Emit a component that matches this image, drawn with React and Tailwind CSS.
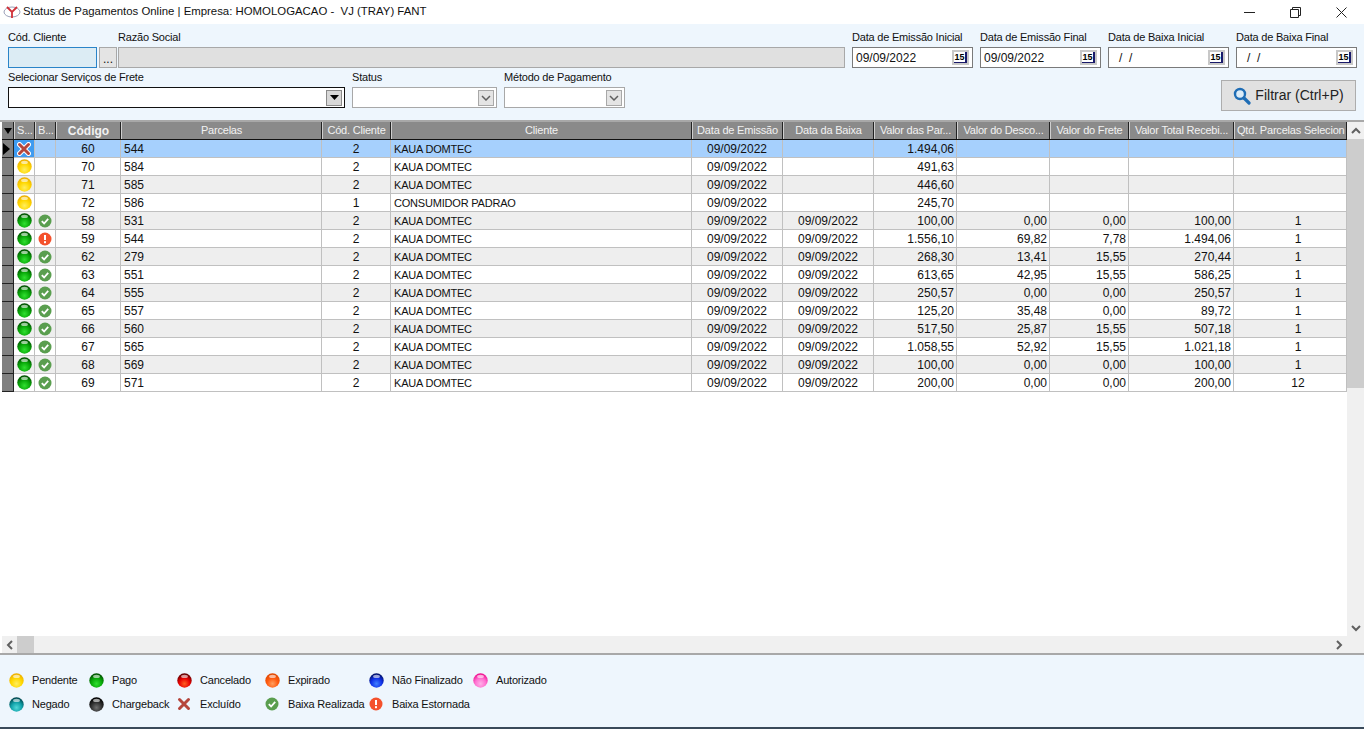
import { useId } from "react";

const FONT = "font-['Liberation_Sans',sans-serif]";
const LABEL = "text-[11px] tracking-[-0.2px]";

const columns = [
  { key: "codigo", label: "Código", w: "w-[65px]", align: "text-center", bold: true },
  { key: "parcelas", label: "Parcelas", w: "w-[201px]", align: "text-left pl-[3px]" },
  { key: "codCliente", label: "Cód. Cliente", w: "w-[69px]", align: "text-center" },
  { key: "cliente", label: "Cliente", w: "w-[301px]", align: `text-left pl-[3px] ${LABEL}` },
  { key: "emissao", label: "Data de Emissão", w: "w-[91px]", align: "text-center" },
  { key: "baixa", label: "Data da Baixa", w: "w-[91px]", align: "text-center" },
  { key: "valor", label: "Valor das Par...", w: "w-[83px]", align: "text-right" },
  { key: "desconto", label: "Valor do Desco...", w: "w-[93px]", align: "text-right" },
  { key: "frete", label: "Valor do Frete", w: "w-[79px]", align: "text-right" },
  { key: "total", label: "Valor Total Recebi...", w: "w-[105px]", align: "text-right" },
  { key: "qtd", label: "Qtd. Parcelas Selecion", w: "w-[113px]", align: "text-center pl-[18px]" },
];

const d = "09/09/2022";
const rows = [
  ["x", "", 60, 544, 2, "KAUA DOMTEC", d, "", "1.494,06", "", "", "", ""],
  ["yellow", "", 70, 584, 2, "KAUA DOMTEC", d, "", "491,63", "", "", "", ""],
  ["yellow", "", 71, 585, 2, "KAUA DOMTEC", d, "", "446,60", "", "", "", ""],
  ["yellow", "", 72, 586, 1, "CONSUMIDOR PADRAO", d, "", "245,70", "", "", "", ""],
  ["green", "ok", 58, 531, 2, "KAUA DOMTEC", d, d, "100,00", "0,00", "0,00", "100,00", 1],
  ["green", "err", 59, 544, 2, "KAUA DOMTEC", d, d, "1.556,10", "69,82", "7,78", "1.494,06", 1],
  ["green", "ok", 62, 279, 2, "KAUA DOMTEC", d, d, "268,30", "13,41", "15,55", "270,44", 1],
  ["green", "ok", 63, 551, 2, "KAUA DOMTEC", d, d, "613,65", "42,95", "15,55", "586,25", 1],
  ["green", "ok", 64, 555, 2, "KAUA DOMTEC", d, d, "250,57", "0,00", "0,00", "250,57", 1],
  ["green", "ok", 65, 557, 2, "KAUA DOMTEC", d, d, "125,20", "35,48", "0,00", "89,72", 1],
  ["green", "ok", 66, 560, 2, "KAUA DOMTEC", d, d, "517,50", "25,87", "15,55", "507,18", 1],
  ["green", "ok", 67, 565, 2, "KAUA DOMTEC", d, d, "1.058,55", "52,92", "15,55", "1.021,18", 1],
  ["green", "ok", 68, 569, 2, "KAUA DOMTEC", d, d, "100,00", "0,00", "0,00", "100,00", 1],
  ["green", "ok", 69, 571, 2, "KAUA DOMTEC", d, d, "200,00", "0,00", "0,00", "200,00", 12],
];

const ballColors = {
  yellow: ["#ffee60", "#ffd800", "#eeb000"],
  green: ["#30e030", "#08a808", "#005000"],
  red: ["#ff6020", "#e80000", "#600000"],
  orange: ["#ffa060", "#ff5a10", "#e04800"],
  blue: ["#4080ff", "#1030e8", "#001068"],
  pink: ["#ffb0e8", "#ff70d0", "#f01090"],
  teal: ["#50d8d8", "#10a0a8", "#004850"],
  black: ["#707070", "#303030", "#000000"],
};

function Ball({ color }) {
  const id = useId();
  const c = ballColors[color];
  return (
    <svg width="15" height="15" viewBox="0 0 15 15" className="shrink-0">
      <defs>
        <radialGradient id={id} cx="50%" cy="72%" r="68%">
          <stop offset="0%" stopColor={c[0]} />
          <stop offset="55%" stopColor={c[1]} />
          <stop offset="100%" stopColor={c[2]} />
        </radialGradient>
      </defs>
      <circle cx="7.5" cy="7.5" r="7.2" fill={`url(#${id})`} />
      <ellipse cx="7.5" cy="3.4" rx="3.4" ry="1.6" fill="#fff" opacity="0.6" />
    </svg>
  );
}

function XIcon({ outlined }) {
  return (
    <svg width="14" height="14" viewBox="0 0 14 14" className="shrink-0">
      {outlined && <path d="M2.5 2.5 11.5 11.5M11.5 2.5 2.5 11.5" stroke="#fff" strokeWidth="5" strokeLinecap="round" />}
      <path d="M2.5 2.5 11.5 11.5M11.5 2.5 2.5 11.5" stroke="#b5463c" strokeWidth="3" strokeLinecap="round" />
    </svg>
  );
}

function OkIcon() {
  return (
    <svg width="14" height="14" viewBox="0 0 14 14" className="shrink-0">
      <circle cx="7" cy="7" r="6.5" fill="#5a9e4f" />
      <path d="M3.8 7.2 6.1 9.5 10.2 4.9" fill="none" stroke="#fff" strokeWidth="1.8" />
    </svg>
  );
}

function ErrIcon() {
  return (
    <svg width="14" height="14" viewBox="0 0 14 14" className="shrink-0">
      <circle cx="7" cy="7" r="6.5" fill="#f4512c" />
      <rect x="6" y="3" width="2" height="5" fill="#fff" />
      <rect x="6" y="9.2" width="2" height="2" fill="#fff" />
    </svg>
  );
}

function StatusIcon({ kind, outlined }) {
  if (kind === "x") return <XIcon outlined={outlined} />;
  if (kind === "ok") return <OkIcon />;
  if (kind === "err") return <ErrIcon />;
  if (kind) return <Ball color={kind} />;
  return null;
}

function HeaderCell({ w, bold, left, children }) {
  return (
    <div className={`${w} shrink-0 h-full bg-[#8a8a8a] border-l border-l-[#cfcfcf] border-r border-r-[#222] flex items-center ${left ? "justify-start pl-[2px]" : "justify-center"} overflow-hidden whitespace-nowrap text-[#f2f2f2] ${bold ? "font-bold text-[12px]" : LABEL}`}>
      {children}
    </div>
  );
}

function CalendarButton() {
  return (
    <div className="w-[17px] h-[15px] bg-[#c8c8c8] flex items-center justify-center">
      <div className="w-[13px] h-[11px] bg-white border-r-2 border-b border-r-[#1a1a6a] border-b-[#1a1a6a] flex items-center justify-center">
        <span className="text-[9px] leading-none font-bold text-black">15</span>
      </div>
    </div>
  );
}

function DateField({ label, value }) {
  return (
    <div className="w-[121px] flex flex-col">
      <span className={`h-[23px] pt-[3px] flex items-center whitespace-nowrap ${LABEL}`}>{label}</span>
      <div className="h-[21px] bg-white border border-[#7a7a7a] flex items-center justify-between pl-[3px] pr-[3px]">
        <span className={value ? "" : "pl-[7px] whitespace-pre"}>{value || "/  /"}</span>
        <CalendarButton />
      </div>
    </div>
  );
}

function ComboButton({ disabled }) {
  return (
    <div className={`w-[16px] h-[16px] border flex items-center justify-center ${disabled ? "bg-[#e4e4e4] border-[#a8a8a8]" : "bg-[#d8d8d8] border-[#8a8a8a]"}`}>
      {disabled ? (
        <svg width="10" height="6" viewBox="0 0 10 6">
          <path d="M1 1 5 5 9 1" fill="none" stroke="#606060" strokeWidth="1.5" />
        </svg>
      ) : (
        <svg width="9" height="5" viewBox="0 0 9 5">
          <path d="M0 0H9L4.5 5Z" fill="#000" />
        </svg>
      )}
    </div>
  );
}

function ComboField({ label, w, active }) {
  return (
    <div className={`${w} flex flex-col`}>
      <span className={`h-[19px] flex items-center whitespace-nowrap ${LABEL}`}>{label}</span>
      <div className={`h-[21px] bg-white border flex items-center justify-end pr-[2px] ${active ? "border-[#111]" : "border-[#a8a8a8]"}`}>
        <ComboButton disabled={!active} />
      </div>
    </div>
  );
}

function Chevron({ dir }) {
  const paths = {
    up: "M1 6 5 2 9 6",
    down: "M1 2 5 6 9 2",
    left: "M6 1 2 5 6 9",
    right: "M2 1 6 5 2 9",
  };
  const box = dir === "up" || dir === "down" ? "0 0 10 8" : "0 0 8 10";
  const size = dir === "up" || dir === "down" ? [10, 8] : [8, 10];
  return (
    <svg width={size[0]} height={size[1]} viewBox={box}>
      <path d={paths[dir]} fill="none" stroke="#606060" strokeWidth="2" />
    </svg>
  );
}

const legend = [
  ["yellow", "Pendente"],
  ["green", "Pago"],
  ["red", "Cancelado"],
  ["orange", "Expirado"],
  ["blue", "Não Finalizado"],
  ["pink", "Autorizado"],
  ["teal", "Negado"],
  ["black", "Chargeback"],
  ["x", "Excluído"],
  ["ok", "Baixa Realizada"],
  ["err", "Baixa Estornada"],
];

export default function App() {
  return (
    <div className={`${FONT} w-[1364px] h-[729px] overflow-hidden flex flex-col bg-white text-[12px] text-[#111]`}>
      {/* TITLE BAR */}
      <div className="h-[24px] shrink-0 flex items-center bg-white">
        <svg width="18" height="14" viewBox="0 0 18 14" className="ml-[3px] mr-[2px]">
          <ellipse cx="9" cy="7" rx="8" ry="5" fill="none" stroke="#9aa0b8" strokeWidth="1" />
          <path d="M4 2 9 7 14 2M9 7V13" fill="none" stroke="#d03038" strokeWidth="1.8" />
        </svg>
        <span className="whitespace-pre text-[11.4px]">Status de Pagamentos Online | Empresa: HOMOLOGACAO -  VJ (TRAY) FANT</span>
        <div className="ml-auto flex items-center h-full">
          <div className="w-[46px] flex justify-center">
            <svg width="11" height="11" viewBox="0 0 11 11"><path d="M0 5.5H11" stroke="#222" /></svg>
          </div>
          <div className="w-[46px] flex justify-center">
            <svg width="11" height="11" viewBox="0 0 11 11" fill="none" stroke="#222"><path d="M.5 2.5H8.5V10.5H.5ZM2.5 2.5V.5H10.5V8.5H8.5" /></svg>
          </div>
          <div className="w-[46px] flex justify-center">
            <svg width="11" height="11" viewBox="0 0 11 11"><path d="M.5.5 10.5 10.5M10.5.5 .5 10.5" stroke="#222" /></svg>
          </div>
        </div>
      </div>

      {/* FILTROS */}
      <div className="h-[96px] shrink-0 bg-[#eef6fd] pl-[8px] pr-[7px] flex flex-col">
        <div className="flex gap-[7px]">
          <div className="flex flex-1 min-w-0">
            <div className="w-[89px] flex flex-col">
              <span className={`h-[23px] pt-[3px] flex items-center ${LABEL}`}>Cód. Cliente</span>
              <div className="h-[21px] bg-[#dcecf4] border border-[#2a84c8]" />
            </div>
            <div className="w-[18px] flex flex-col ml-[2px] mr-[1px]">
              <span className="h-[23px]" />
              <div className="h-[21px] bg-[#e4e4e4] border border-[#a8a8a8] flex items-end justify-center pb-[2px] leading-none">...</div>
            </div>
            <div className="flex-1 flex flex-col">
              <span className={`h-[23px] pt-[3px] flex items-center ${LABEL}`}>Razão Social</span>
              <div className="h-[21px] bg-[#e0e0e0] border border-[#a8a8a8]" />
            </div>
          </div>
          <DateField label="Data de Emissão Inicial" value="09/09/2022" />
          <DateField label="Data de Emissão Final" value="09/09/2022" />
          <DateField label="Data de Baixa Inicial" />
          <DateField label="Data de Baixa Final" />
        </div>
        <div className="flex gap-[7px]">
          <ComboField label="Selecionar Serviços de Frete" w="w-[337px]" active />
          <ComboField label="Status" w="w-[145px]" />
          <ComboField label="Método de Pagamento" w="w-[121px]" />
          <button className="ml-auto mr-[1px] mt-[12px] w-[135px] h-[31px] bg-[#e1e1e1] border border-[#adadad] flex items-center justify-center gap-[4px] text-[14px] text-[#222]">
            <svg width="18" height="18" viewBox="0 0 18 18">
              <circle cx="7" cy="7" r="5" fill="#dcecf8" stroke="#1f6db5" strokeWidth="2.4" />
              <path d="M11 11 16 16" stroke="#1f6db5" strokeWidth="3.2" strokeLinecap="round" />
            </svg>
            Filtrar (Ctrl+P)
          </button>
        </div>
      </div>

      {/* GRADE */}
      <div className="flex-1 min-h-0 flex flex-col border-t-2 border-t-[#a8a8a8] border-b-2 border-b-[#a8a8a8] pl-[2px]">
        <div className="flex-1 min-h-0 flex">
          <div className="flex-1 min-w-0 flex flex-col">
            <div className="h-[18px] flex border-b border-b-[#111] shrink-0">
              <div className="w-[12px] h-full bg-[#808080] border-r border-r-[#222] flex items-center justify-center">
                <svg width="8" height="6" viewBox="0 0 8 6"><path d="M0 0H8L4 6Z" fill="#000" /></svg>
              </div>
              <HeaderCell w="w-[21px]" left>S...</HeaderCell>
              <HeaderCell w="w-[21px]" left>B...</HeaderCell>
              {columns.map((c) => (
                <HeaderCell key={c.key} w={c.w} bold={c.bold} left={c.key === "qtd"}>{c.label}</HeaderCell>
              ))}
            </div>
            {rows.map((r, i) => {
              const selected = i === 0;
              const bg = selected ? "bg-[#a6d0fd]" : i % 2 === 0 ? "bg-[#eeeeee]" : "bg-white";
              const values = r.slice(2);
              return (
                <div key={r[2]} className={`h-[18px] shrink-0 flex border-b border-b-[#c0c0c0] ${bg}`}>
                  <div className="w-[12px] h-[18px] bg-[#808080] border-r border-r-[#222] border-b border-b-[#222] flex items-center">
                    {selected && <svg width="8" height="12" viewBox="0 0 8 12"><path d="M1 0 8 6 1 12Z" fill="#000" /></svg>}
                  </div>
                  <div className={`w-[21px] shrink-0 flex items-center justify-center border-r border-r-[#c0c0c0] ${selected ? "bg-[#3f9bf0]" : ""}`}>
                    <StatusIcon kind={r[0]} outlined={selected} />
                  </div>
                  <div className="w-[21px] shrink-0 flex items-center justify-center border-r border-r-[#c0c0c0]">
                    <StatusIcon kind={r[1]} />
                  </div>
                  {columns.map((c, j) => (
                    <div key={c.key} className={`${c.w} ${c.align} shrink-0 px-[2px] border-r border-r-[#c0c0c0] leading-[19px] whitespace-nowrap overflow-hidden`}>
                      {values[j]}
                    </div>
                  ))}
                </div>
              );
            })}
          </div>
          <div className="w-[17px] shrink-0 bg-[#f0f0f0] flex flex-col">
            <div className="h-[17px] flex items-center justify-center"><Chevron dir="up" /></div>
            <div className="h-[249px] bg-[#cdcdcd]" />
            <div className="mt-auto h-[17px] flex items-center justify-center"><Chevron dir="down" /></div>
          </div>
        </div>
        <div className="h-[17px] shrink-0 bg-[#f0f0f0] flex items-center">
          <div className="w-[15px] flex items-center justify-center"><Chevron dir="left" /></div>
          <div className="w-[17px] h-full bg-[#cdcdcd]" />
          <div className="ml-auto w-[17px] mr-[17px] flex items-center justify-center"><Chevron dir="right" /></div>
        </div>
      </div>

      {/* LEGENDA */}
      <div className={`h-[72px] shrink-0 bg-[#eef6fd] pl-[9px] pt-[13px] grid grid-cols-[80px_88px_88px_104px_104px_1fr] auto-rows-[24px] ${LABEL}`}>
        {legend.map(([kind, label]) => (
          <div key={label} className="flex items-center whitespace-nowrap">
            <span className="w-[23px] shrink-0"><StatusIcon kind={kind} /></span>
            {label}
          </div>
        ))}
      </div>
      <div className="h-[2px] shrink-0 bg-[#3a4a5a]" />
    </div>
  );
}
